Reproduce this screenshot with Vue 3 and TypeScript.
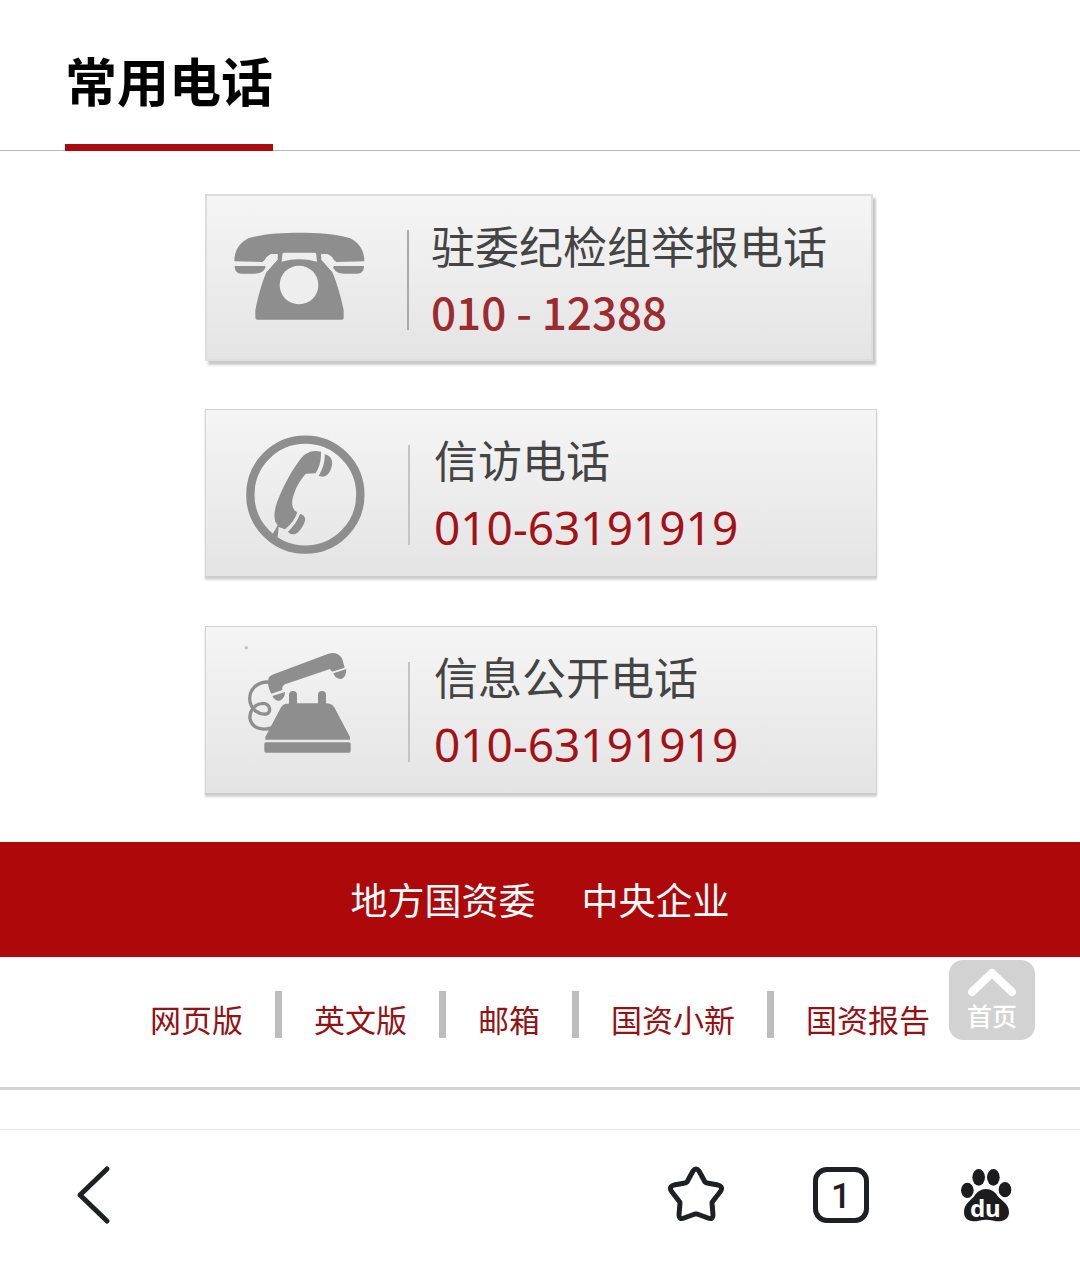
<script setup lang="ts">
interface Hotline {
  id: string
  title: string
  phone: string
  icon: 'desk' | 'circle' | 'lifted'
  raised: boolean
}

const hotlines: Hotline[] = [
  { id: 'report', title: '驻委纪检组举报电话', phone: '010 - 12388', icon: 'desk', raised: true },
  { id: 'petition', title: '信访电话', phone: '010-63191919', icon: 'circle', raised: false },
  { id: 'disclosure', title: '信息公开电话', phone: '010-63191919', icon: 'lifted', raised: false },
]

const portals: string[] = ['地方国资委', '中央企业']
const links: string[] = ['网页版', '英文版', '邮箱', '国资小新', '国资报告']

const telHref = (phone: string): string => 'tel:' + phone.replace(/\s/g, '')
const toTop = (): void => window.scrollTo({ top: 0, behavior: 'smooth' })
</script>

<template>
  <div class="page">
    <header class="heading">
      <h1 class="heading-title">常用电话</h1>
    </header>

    <main class="hotlines">
      <a
        v-for="line in hotlines"
        :key="line.id"
        class="card"
        :class="{ raised: line.raised }"
        :href="telHref(line.phone)"
      >
        <svg v-if="line.icon === 'desk'" class="card-icon" viewBox="30 27 606 504" aria-hidden="true">
          <path d="M118 229C118 200 130 176 160 160C205 146 260 143 313 143C366 143 421 146 466 160C496 176 508 200 508 229L424 231C413 226 412 214 398 208L379 207V224L412 262C428 300 440 345 446 376V398Q446 404 440 404H187Q181 404 181 398V376C187 345 198 300 214 262L248 224V207L228 208C214 214 213 226 202 231Z" />
          <path d="M119 243H213C208 260 195 266 178 266H140C126 266 119 258 119 243ZM507 243H413C418 260 431 266 448 266H486C500 266 507 258 507 243Z" />
          <path class="cut" d="M268 203H358Q364 203 364 209L366 230Q340 223 313 223Q286 223 260 230L262 209Q262 203 268 203Z" />
          <path class="cut" d="M228 208L247 207L246 224L218 255L202 232Q212 226 214 217ZM398 208L379 207L381 224L409 255L424 232Q414 226 412 217Z" />
          <circle class="cut" cx="312" cy="300" r="58" />
        </svg>
        <svg v-else-if="line.icon === 'circle'" class="card-icon" viewBox="30 27 606 504" aria-hidden="true">
          <circle class="ring" cx="331" cy="284" r="165" />
          <path d="M378 155C350 149 330 158 312 183C282 224 262 266 246 307C238 330 236 350 241 366L248 376L232 404L248 412L251 381L270 388C288 374 301 357 307 337C294 330 290 318 292 300C298 270 314 240 333 221L362 220C372 203 379 184 378 155Z" />
          <path d="M389 163C406 167 413 178 411 194C408 214 398 228 384 230L371 228C382 208 390 188 389 163ZM315 342C308 362 296 379 279 395C288 406 300 405 310 396C321 385 328 373 331 358C329 348 323 343 315 342Z" />
        </svg>
        <svg v-else class="card-icon" viewBox="30 33 606 504" aria-hidden="true">
          <path d="M220 192Q222 183 236 178L392 119Q426 105 442 132L449 158L411 170L405 162L270 208Q260 214 262 225L229 236Q216 213 220 192Z" />
          <path d="M454 162L415 175Q422 193 438 192Q454 187 454 162ZM270 231L232 243Q239 258 254 257Q270 251 270 231Z" />
          <path d="M282 266V240Q282 228 294 228Q306 228 306 240V265H369V240Q369 228 381 228Q393 228 393 240V265L404 266Q413 268 418 277L465 366V374H211V366L258 277Q263 268 272 266Z" />
          <rect x="208" y="382" width="259" height="31" rx="5" />
          <path class="cord" d="M222 201C184 200 164 224 164 252C166 286 194 300 214 297C230 292 226 266 204 265C176 266 160 292 166 316C174 340 204 348 232 338" />
          <circle class="speck" cx="154" cy="98" r="5" />
        </svg>
        <span class="divider"></span>
        <span class="card-text">
          <span class="card-title">{{ line.title }}</span>
          <span class="card-phone">{{ line.phone }}</span>
        </span>
      </a>
    </main>

    <nav class="portals">
      <a v-for="name in portals" :key="name" href="#">{{ name }}</a>
    </nav>

    <footer class="links">
      <template v-for="(name, i) in links" :key="name">
        <span v-if="i > 0" class="bar"></span>
        <a href="#">{{ name }}</a>
      </template>
      <button class="to-top" type="button" @click="toTop">
        <svg width="50" height="30" viewBox="0 0 50 30" aria-hidden="true">
          <path d="M5 24L25 5L45 24" />
        </svg>
        <span>首页</span>
      </button>
    </footer>

    <nav class="toolbar">
      <button type="button" class="tool back" aria-label="返回">
        <svg viewBox="0 0 64 64"><path d="M45 6L18 32L45 58" /></svg>
      </button>
      <button type="button" class="tool" aria-label="收藏">
        <svg viewBox="0 0 64 64">
          <path d="M29 8Q32 4 35 8L41 19Q42 20 43 20L54 22Q60 24 56 29L49 38Q48 39 48 40L49 52Q49 57 44 55L33 51Q32 51 31 51L20 55Q15 57 15 52L16 40Q16 39 15 38L8 29Q4 24 10 22L21 20Q22 20 23 19Z" />
        </svg>
      </button>
      <button type="button" class="tool" aria-label="窗口">
        <span class="tabs">1</span>
      </button>
      <button type="button" class="tool" aria-label="百度首页">
        <svg class="paw" viewBox="0 0 192 192">
          <ellipse cx="40" cy="82" rx="19" ry="23" />
          <ellipse cx="74" cy="43" rx="19" ry="25" />
          <ellipse cx="118" cy="43" rx="19" ry="25" />
          <ellipse cx="153" cy="80" rx="19" ry="23" />
          <path d="M96 78C112 78 123 87 131 99C142 113 165 122 165 148C165 164 153 175 136 175C122 175 110 170 96 170C82 170 72 175 58 175C41 175 30 164 30 148C30 122 50 113 61 99C69 87 80 78 96 78Z" />
          <text x="94" y="161" text-anchor="middle">du</text>
        </svg>
      </button>
    </nav>
  </div>
</template>

<style>
body {
  background: #fff;
}
</style>

<style scoped>
.page {
  position: relative;
  font-family: "Noto Sans CJK SC", sans-serif;
  color: #000;
}

a {
  color: inherit;
  text-decoration: none;
}

button {
  padding: 0;
  border: 0;
  background: none;
  font-family: inherit;
  cursor: pointer;
}

.heading {
  display: flex;
  padding-left: 65px;
  box-shadow: inset 0 -1px #bbb;
}

.heading-title {
  margin: 0;
  padding: 32px 0;
  border-bottom: 7px solid #ac0a0f;
  font-size: 52px;
  font-weight: 700;
  line-height: 80px;
  padding-top: 40px;
  padding-bottom: 24px;
}

.hotlines {
  display: flex;
  flex-direction: column;
  align-items: center;
  gap: 48px;
  padding: 43px 0 47px 2px;
}

.card {
  display: flex;
  box-sizing: border-box;
  width: 672px;
  max-width: 100%;
  height: 169px;
  border: 1px solid #d4d4d4;
  border-bottom: 2px solid #ccc;
  background: linear-gradient(#f5f5f5, #e4e4e4);
  box-shadow: 0 2px 2px #d4d4d4;
}

.card.raised {
  width: 668px;
  height: 167px;
  margin-right: 4px;
  border: 2px solid #ddd;
  box-shadow: 3px 4px 2px #cacaca;
}

.card-icon {
  flex: none;
  width: 202px;
  height: 168px;
  margin: -1px 0 0 -1px;
  fill: #8e8e8e;
}

.raised .card-icon {
  margin: -2px 0 0 -2px;
}

.cut {
  fill: #eee;
}

.ring {
  fill: none;
  stroke: #8e8e8e;
  stroke-width: 25px;
}

.cord {
  fill: none;
  stroke: #8e8e8e;
  stroke-width: 10px;
}

.speck {
  fill: #c4c4c4;
}

.divider {
  flex: none;
  width: 2px;
  height: 100px;
  margin: 35px 24px 0 1px;
  background: #c4c4c4;
}

.raised .divider {
  margin: 34px 22px 0 0;
  background: #aaa;
}

.card-text {
  display: flex;
  flex-direction: column;
  padding-top: 17px;
  font-size: 44px;
  line-height: 64px;
  white-space: nowrap;
}

.card-title {
  color: #444;
}

.card-phone {
  color: #a31216;
  font-family: "Noto Sans", sans-serif;
  font-size: 46px;
  line-height: 72px;
}

.raised .card-phone {
  color: #9c2b30;
  font-family: inherit;
  font-size: 44px;
  font-weight: 500;
  line-height: 68px;
}

.portals {
  display: flex;
  justify-content: center;
  gap: 46px;
  background: #ad090b;
  color: #fff;
  font-size: 37px;
  line-height: 115px;
}

.links {
  position: relative;
  display: flex;
  justify-content: center;
  align-items: center;
  gap: 32px;
  padding: 34px 0 49px;
  border-bottom: 3px solid #d3d3d3;
  color: #941114;
  font-size: 31px;
  line-height: 47px;
  white-space: nowrap;
}

.links a {
  padding-top: 4px;
  margin-bottom: -4px;
}

.bar {
  width: 7px;
  height: 47px;
  background: #bdbdbd;
}

.to-top {
  position: absolute;
  top: 3px;
  right: 45px;
  display: flex;
  flex-direction: column;
  align-items: center;
  width: 86px;
  height: 80px;
  padding-top: 8px;
  border-radius: 14px;
  background: #d2d2d2;
  color: #fff;
  font-size: 25px;
  font-weight: 500;
  line-height: 34px;
}

.to-top svg {
  flex: none;
  fill: none;
  stroke: #fff;
  stroke-width: 8px;
  stroke-linecap: round;
  stroke-linejoin: round;
}

.toolbar {
  display: flex;
  gap: 81px;
  margin-top: 39px;
  padding: 33px 62px 36px;
  border-top: 1px solid #ececec;
}

.tool {
  display: flex;
  align-items: center;
  justify-content: center;
  width: 64px;
  height: 64px;
}

.back {
  margin-right: auto;
}

.tool svg {
  width: 64px;
  height: 64px;
  fill: none;
  stroke: #1f2024;
  stroke-width: 5px;
  stroke-linecap: round;
  stroke-linejoin: round;
}

.tabs {
  box-sizing: border-box;
  width: 56px;
  height: 56px;
  border: 5px solid #1f2024;
  border-radius: 14px;
  color: #1f2024;
  font-family: Roboto, sans-serif;
  font-size: 35px;
  font-weight: 500;
  line-height: 49px;
}

.tool .paw {
  fill: #1c1c1e;
  stroke: none;
}

.paw text {
  fill: #fff;
  font-family: "Noto Sans", sans-serif;
  font-size: 72px;
  font-weight: 700;
}
</style>
